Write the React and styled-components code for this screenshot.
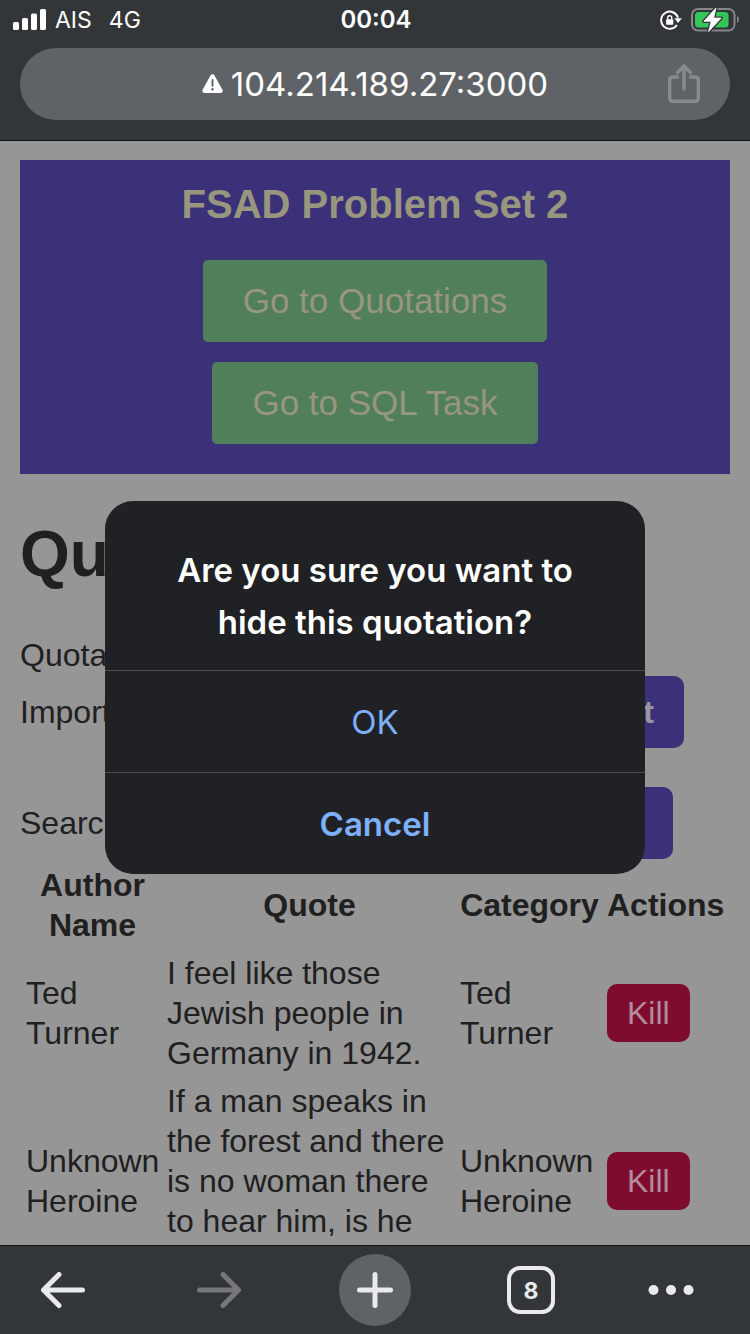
import React from 'react';
import styled, { createGlobalStyle, css } from 'styled-components';

const GlobalStyle = createGlobalStyle`
  *, *::before, *::after { box-sizing: border-box; }
  body { margin: 0; background: #333639; }
  button, input { font: inherit; color: inherit; margin: 0; }
`;

const system = css`font-family: Inter, 'Liberation Sans', sans-serif;`;

const bareButton = css`
  display: flex;
  align-items: center;
  justify-content: center;
  padding: 0;
  border: 0;
  background: none;
  cursor: pointer;
`;

const Screen = styled.div`
  display: flex;
  flex-direction: column;
  height: 100vh;
  overflow: hidden;
`;

/* Browser chrome, top */

const TopBar = styled.header`
  ${system}
  position: relative;
  z-index: 1;
  flex: none;
  padding-bottom: 20px;
  background: #333639;
  color: #fff;
  box-shadow: 0 1px 0 #101112;
`;

const StatusBar = styled.div`
  display: grid;
  grid-template-columns: 1fr auto 1fr;
  align-items: center;
  height: 40px;
  padding: 0 11px 0 13px;
  font-size: 23px;
  line-height: 40px;
`;

const StatusGroup = styled.div`
  display: flex;
  align-items: center;
  gap: ${(p) => p.$gap}px;
  justify-content: ${(p) => (p.$end ? 'flex-end' : 'flex-start')};
`;

const Network = styled.span`
  margin-left: 8px;
`;

const Clock = styled.time`
  font-size: 24px;
  font-weight: 600;
`;

const AddressBar = styled.div`
  display: grid;
  grid-template-columns: 1fr auto 1fr;
  align-items: center;
  height: 72px;
  margin: 8px 20px 0;
  padding: 0 30px;
  border-radius: 36px;
  background: #5f6367;
`;

const Address = styled.button`
  ${bareButton}
  grid-column: 2;
  gap: 8px;
  font-size: 33px;
  line-height: 72px;
`;

const ShareButton = styled.button`
  ${bareButton}
  justify-self: end;
`;

/* Web page */

const Viewport = styled.div`
  position: relative;
  flex: 1;
  min-height: 0;
  overflow: hidden;
  background: #969696;
`;

const Page = styled.main`
  padding: 20px;
  font: 32px/40px 'Liberation Sans', Arial, sans-serif;
  color: #202020;
`;

const Banner = styled.section`
  display: flex;
  flex-direction: column;
  align-items: center;
  gap: 20px;
  padding: 20px 20px 30px;
  background: #3b3178;
  color: #98967f;
`;

const BannerTitle = styled.h2`
  margin: 0 0 12px;
  font-size: 40px;
  line-height: 48px;
`;

const BannerLink = styled.a`
  padding: 20px 40px;
  border-radius: 5px;
  background: #507f5a;
  color: inherit;
  font-size: 35px;
  line-height: 42px;
  text-decoration: none;
`;

const Heading = styled.h1`
  margin: 40px 0;
  font-size: 64px;
  line-height: 80px;
`;

const Summary = styled.p`
  margin: 0;
  line-height: 42px;
`;

const FormRow = styled.form`
  display: flex;
  align-items: center;
  gap: 20px;
  margin-bottom: ${(p) => (p.$last ? 0 : 39)}px;
  padding-right: ${(p) => p.$inset}px;
`;

const Field = styled.input`
  flex: 1;
  min-width: 0;
  height: 44px;
  border: 2px solid #6c6c6c;
  background: #969696;
  font-size: 24px;
`;

const SubmitButton = styled.button`
  height: 72px;
  padding: 0 30px;
  border: 0;
  border-radius: 10px;
  background: #3b3178;
  color: #99989f;
  font-weight: 700;
`;

const QuoteTable = styled.table`
  width: 100%;
  table-layout: fixed;
  border-spacing: 4px;
  th, td { padding: 2px; }
  td { text-align: left; vertical-align: middle; }
`;

const Col = styled.col`
  width: ${(p) => p.$width}px;
`;

const KillButton = styled.button`
  display: block;
  height: 58px;
  padding: 0 20px;
  border: 0;
  border-radius: 10px;
  background: #7f0c2f;
  color: #b08d9a;
`;

/* Confirmation dialog */

const Overlay = styled.div`
  position: absolute;
  inset: 0;
  display: flex;
  align-items: center;
  justify-content: center;
  padding-bottom: 10px;
`;

const Dialog = styled.div`
  ${system}
  width: 72%;
  max-width: 540px;
  overflow: hidden;
  border-radius: 28px;
  background: #202124;
  font-size: 33px;
`;

const Message = styled.p`
  margin: 0;
  padding: 43px 64px 22px;
  color: #fff;
  font-weight: 600;
  line-height: 52px;
  text-align: center;
`;

const DialogButton = styled.button`
  ${bareButton}
  width: 100%;
  height: 102px;
  border-top: 1px solid #4b4c50;
  color: #7dafFA;
  font-weight: ${(p) => (p.$strong ? 600 : 400)};
`;

/* Browser chrome, bottom */

const ToolBar = styled.nav`
  ${system}
  display: flex;
  flex: none;
  align-items: center;
  justify-content: space-between;
  height: 89px;
  padding: 0 24px;
  border-top: 1px solid #101112;
  background: #333639;
  color: #e8eaed;
`;

const ToolButton = styled.button`
  ${bareButton}
  width: 78px;
  height: 72px;
  justify-content: ${(p) => (p.$start ? 'flex-start' : 'center')};
  color: ${(p) => (p.disabled ? '#75777b' : '#e8eaed')};
`;

const NewTabDisc = styled.span`
  display: flex;
  align-items: center;
  justify-content: center;
  width: 72px;
  height: 72px;
  border-radius: 50%;
  background: #5f6368;
`;

const TabCount = styled.span`
  width: 48px;
  height: 48px;
  border: 4px solid currentColor;
  border-radius: 13px;
  font-size: 23px;
  font-weight: 700;
  line-height: 42px;
  text-align: center;
`;

const SignalIcon = () => (
  <svg width="33" height="22" viewBox="0 0 33 22" fill="#fff" aria-hidden="true">
    <rect x="0" y="13" width="6" height="8" rx="1.6" />
    <rect x="9" y="9" width="6" height="12" rx="1.6" />
    <rect x="18" y="4.5" width="6" height="16.5" rx="1.6" />
    <rect x="27" y="0" width="6" height="21" rx="1.6" />
  </svg>
);

const RotationLockIcon = () => (
  <svg width="22" height="22" viewBox="0 0 22 22" fill="none" stroke="#fff" aria-hidden="true">
    <path d="M18 8.8 A8.6 8.6 0 1 0 16.9 16" strokeWidth="1.9" />
    <path d="M14.4 9.3 H21.8 L18.1 14 Z" fill="#fff" stroke="none" />
    <rect x="6.1" y="10.2" width="7.2" height="5.6" rx="1" fill="#fff" stroke="none" />
    <path d="M7.7 10.6 V8.8 a2 2 0 0 1 4 0 V10.6" strokeWidth="1.4" />
  </svg>
);

const BatteryIcon = () => (
  <svg width="48" height="26" viewBox="0 0 48 26" aria-hidden="true">
    <rect x="1" y="2" width="42.5" height="21.6" rx="6" fill="none" stroke="#85878a" strokeWidth="2" />
    <path d="M46 9 q2 1 2 3.5 t-2 3.5 Z" fill="#85878a" />
    <rect x="4" y="5" width="33.5" height="15.6" rx="3.5" fill="#35c659" />
    <path d="M25 .9 L12.8 14.3 H20.2 L17.6 24.6 L30.2 11.1 H22.6 Z" fill="#fff" stroke="#333639" strokeWidth="3.4" strokeLinejoin="round" />
    <path d="M25 .9 L12.8 14.3 H20.2 L17.6 24.6 L30.2 11.1 H22.6 Z" fill="#fff" stroke="#fff" strokeWidth=".8" strokeLinejoin="round" />
  </svg>
);

const WarningIcon = () => (
  <svg width="21" height="20" viewBox="0 0 21 20" aria-hidden="true">
    <path d="M10.5 2.6 L18.4 16.8 H2.6 Z" fill="#fff" stroke="#fff" strokeWidth="4.6" strokeLinejoin="round" />
    <path d="M10.5 6 V11.8" stroke="#5f6367" strokeWidth="1.9" strokeLinecap="round" />
    <circle cx="10.5" cy="15.2" r="1.2" fill="#5f6367" />
  </svg>
);

const ShareIcon = () => (
  <svg width="32" height="40" viewBox="0 0 32 40" fill="none" stroke="#888b8e" strokeWidth="3.4" aria-hidden="true">
    <path d="M11 13 H5 Q1.7 13 1.7 16.3 V34 Q1.7 37.3 5 37.3 H27 Q30.3 37.3 30.3 34 V16.3 Q30.3 13 27 13 H21" />
    <path d="M16 25 V2.5 M9.5 8.5 L16 2 L22.5 8.5" strokeLinecap="round" />
  </svg>
);

const ArrowIcon = ({ forward }) => (
  <svg width="46" height="38" viewBox="0 0 46 38" fill="none" stroke="currentColor" strokeWidth="5" strokeLinecap="round" strokeLinejoin="round" aria-hidden="true">
    <path d={forward ? 'M3.5 19 H42 M27 3.5 L42.5 19 L27 34.5' : 'M42.5 19 H4 M19 3.5 L3.5 19 L19 34.5'} />
  </svg>
);

const PlusIcon = () => (
  <svg width="38" height="38" viewBox="0 0 38 38" stroke="#e8eaed" strokeWidth="5" strokeLinecap="round" aria-hidden="true">
    <path d="M19 3.5 V34.5 M3.5 19 H34.5" />
  </svg>
);

const DotsIcon = () => (
  <svg width="46" height="10" viewBox="0 0 46 10" fill="currentColor" aria-hidden="true">
    <circle cx="5.5" cy="5" r="5" />
    <circle cx="23" cy="5" r="5" />
    <circle cx="40.5" cy="5" r="5" />
  </svg>
);

const quotes = [
  {
    author: 'Ted Turner',
    text: 'I feel like those Jewish people in Germany in 1942.',
    category: 'Ted Turner',
  },
  {
    author: 'Unknown Heroine',
    text: 'If a man speaks in the forest and there is no woman there to hear him, is he still wrong?',
    category: 'Unknown Heroine',
  },
];

export default function App() {
  return (
    <Screen>
      <GlobalStyle />
      <TopBar>
        <StatusBar>
          <StatusGroup $gap={9}>
            <SignalIcon />
            <span>AIS</span>
            <Network>4G</Network>
          </StatusGroup>
          <Clock>00:04</Clock>
          <StatusGroup $gap={9} $end>
            <RotationLockIcon />
            <BatteryIcon />
          </StatusGroup>
        </StatusBar>
        <AddressBar>
          <Address type="button">
            <WarningIcon />
            104.214.189.27:3000
          </Address>
          <ShareButton type="button" aria-label="Share">
            <ShareIcon />
          </ShareButton>
        </AddressBar>
      </TopBar>

      <Viewport>
        <Page>
          <Banner>
            <BannerTitle>FSAD Problem Set 2</BannerTitle>
            <BannerLink href="#quotations">Go to Quotations</BannerLink>
            <BannerLink href="#sql">Go to SQL Task</BannerLink>
          </Banner>
          <Heading id="quotations">Quotations</Heading>
          <Summary>Quotations</Summary>
          <FormRow $inset={46}>
            <label htmlFor="import">Import</label>
            <Field id="import" type="text" />
            <SubmitButton type="button">Import</SubmitButton>
          </FormRow>
          <FormRow $inset={57} $last>
            <label htmlFor="search">Search</label>
            <Field id="search" type="text" />
            <SubmitButton type="button">Search</SubmitButton>
          </FormRow>
          <QuoteTable>
            <colgroup>
              <Col $width={137} />
              <col />
              <Col $width={143} />
              <Col $width={121} />
            </colgroup>
            <thead>
              <tr>
                <th>Author Name</th>
                <th>Quote</th>
                <th>Category</th>
                <th>Actions</th>
              </tr>
            </thead>
            <tbody>
              {quotes.map((quote) => (
                <tr key={quote.author}>
                  <td>{quote.author}</td>
                  <td>{quote.text}</td>
                  <td>{quote.category}</td>
                  <td>
                    <KillButton type="button">Kill</KillButton>
                  </td>
                </tr>
              ))}
            </tbody>
          </QuoteTable>
        </Page>
        <Overlay>
          <Dialog role="alertdialog" aria-modal="true" aria-labelledby="confirm-message">
            <Message id="confirm-message">Are you sure you want to hide this quotation?</Message>
            <DialogButton type="button">OK</DialogButton>
            <DialogButton type="button" $strong>Cancel</DialogButton>
          </Dialog>
        </Overlay>
      </Viewport>

      <ToolBar aria-label="Browser">
        <ToolButton type="button" aria-label="Back"><ArrowIcon /></ToolButton>
        <ToolButton type="button" aria-label="Forward" disabled><ArrowIcon forward /></ToolButton>
        <ToolButton type="button" aria-label="New tab">
          <NewTabDisc><PlusIcon /></NewTabDisc>
        </ToolButton>
        <ToolButton type="button"><TabCount>8</TabCount></ToolButton>
        <ToolButton type="button" aria-label="More" $start><DotsIcon /></ToolButton>
      </ToolBar>
    </Screen>
  );
}
